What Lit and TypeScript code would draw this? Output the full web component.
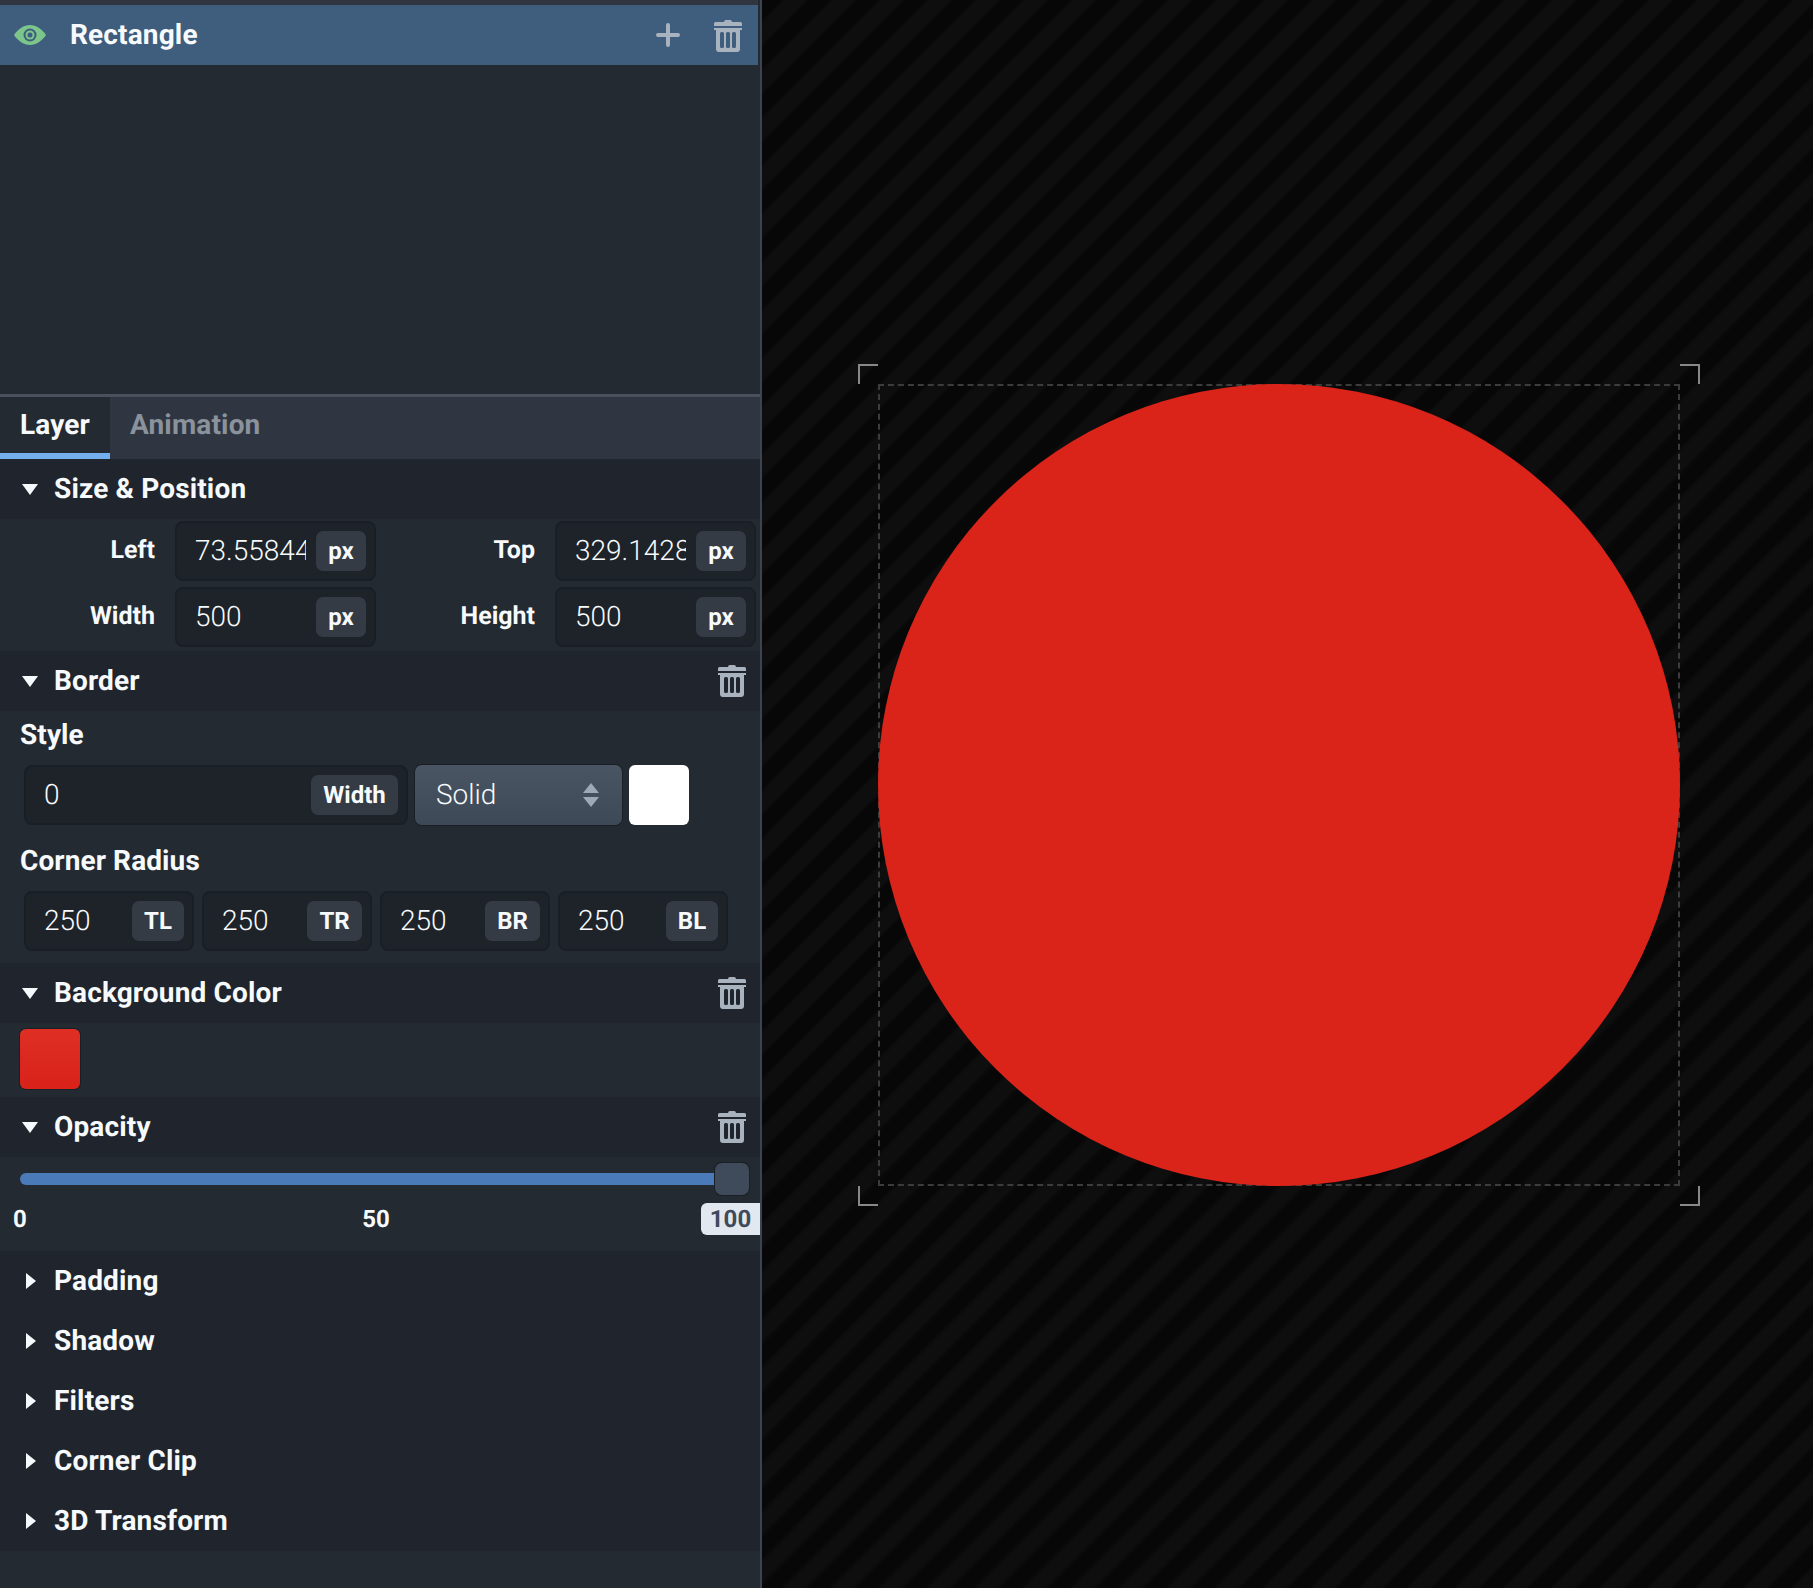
import { LitElement, html, css } from "lit";
import { customElement } from "lit/decorators.js";

const trash = () => html`<svg class="trash" viewBox="0 0 28 32"><path fill-rule="evenodd" d="M12 0h4a2 2 0 0 1 2 2h8.500a1.500 1.500 0 0 1 1.500 1.500V6H0V3.500A1.500 1.500 0 0 1 1.500 2H10a2 2 0 0 1 2-2zM0 8h28v2h-2v19a3 3 0 0 1-3 3H5a3 3 0 0 1-3-3V10H0zM7.500 12A1.500 1.500 0 0 0 6 13.500v13A1.500 1.500 0 0 0 7.500 28h1a1.500 1.500 0 0 0 1.500-1.500v-13A1.500 1.500 0 0 0 8.500 12zM13.500 12a1.500 1.500 0 0 0-1.500 1.500v13a1.500 1.500 0 0 0 1.500 1.500h1a1.500 1.500 0 0 0 1.500-1.500v-13a1.500 1.500 0 0 0-1.500-1.500zM19.500 12a1.500 1.500 0 0 0-1.500 1.500v13a1.500 1.500 0 0 0 1.500 1.500h1a1.500 1.500 0 0 0 1.500-1.500v-13a1.500 1.500 0 0 0-1.500-1.500z"/></svg>`;

@customElement("app-root")
export class AppRoot extends LitElement {
  static styles = css`
    :host { display: flex; width: 1813px; height: 1588px; overflow: hidden; font-family: Roboto, "Liberation Sans", sans-serif; color: #f7fafc; text-rendering: geometricPrecision; }
    .panel { width: 760px; flex: none; background: #232a32; display: flex; flex-direction: column; border-right: 2px solid #3c444f; }
    .strip { height: 5px; background: #2f3640; width: 758px; }
    .layer { width: 758px; height: 60px; background: #3f5d7d; display: flex; align-items: center; font-size: 28px; font-weight: 700; letter-spacing: 0.15px; }
    .layer span { padding-bottom: 2px; }
    .eye { width: 32px; height: 20px; margin-left: 14px; margin-right: 24px; flex: none; }
    .grow { flex: 1; }
    .plus { width: 24px; height: 24px; flex: none; margin-right: 34px; }
    .layer .trash { margin-right: 16px; margin-top: 2px; }
    .trash { width: 28px; height: 32px; fill: #a9b3bf; flex: none; }
    .layers { height: 329px; }
    .divider { height: 3px; background: #49515c; }
    .tabs { height: 62px; background: #2f3642; display: flex; font-size: 28px; font-weight: 700; letter-spacing: 0.15px; }
    .tab { padding: 0 20px 8px; display: flex; align-items: center; color: #8a929c; }
    .tab.on { background: #232a32; color: #f7fafc; border-bottom: 6px solid #74aeed; padding-bottom: 2px; width: 110px; box-sizing: border-box; }
    .head { height: 60px; background: #20252d; display: flex; align-items: center; font-size: 28px; font-weight: 700; padding-right: 14px; letter-spacing: 0.15px; }
    .head span { padding-bottom: 2px; }
    .tri { width: 32px; margin-left: 20px; margin-right: 2px; flex: none; display: flex; }
    .down { margin-left: 2px; width: 0; height: 0; border-left: 8px solid transparent; border-right: 8px solid transparent; border-top: 11px solid #f7fafc; margin-top: 1px; }
    .right { margin-left: 6px; width: 0; height: 0; border-top: 8px solid transparent; border-bottom: 8px solid transparent; border-left: 10px solid #f7fafc; }
    .size { display: grid; grid-template-columns: 155px 201px 139px 201px; column-gap: 20px; row-gap: 6px; height: 132px; padding-top: 2px; box-sizing: border-box; align-items: center; grid-auto-rows: 60px; }
    .lab { text-align: right; font-size: 25px; font-weight: 700; padding-bottom: 2px; }
    .box { height: 60px; box-sizing: border-box; background: #1d2329; border: 2px solid #1a1f26; border-radius: 8px; display: flex; align-items: center; padding-left: 18px; padding-right: 8px; font-size: 28px; font-weight: 300; color: #f7fafc; }
    .val { flex: 1; overflow: hidden; white-space: nowrap; min-width: 0; margin-right: 10px; padding-bottom: 1px; }
    .tag { height: 40px; flex: none; background: #343b45; border-radius: 7px; display: flex; align-items: center; justify-content: center; font-size: 24px; font-weight: 700; }
    .border { height: 252px; padding-left: 20px; box-sizing: border-box; }
    .sub { font-size: 28px; font-weight: 700; height: 30px; line-height: 30px; letter-spacing: 0.1px; }
    .style-row { display: flex; margin: 15px 0 0 4px; gap: 7px; }
    .select { width: 207px; height: 60px; box-sizing: border-box; border-radius: 7px; background: linear-gradient(#4a5564, #3e4957); box-shadow: 0 0 0 1px #1a1f26; display: flex; align-items: center; padding-left: 21px; font-size: 28px; font-weight: 300; position: relative; }
    .arrows { position: absolute; left: 168px; top: 18px; width: 16px; height: 24px; fill: #9fa9b5; }
    .swatch { width: 60px; height: 60px; border-radius: 6px; background: #fff; }
    .radii { display: flex; gap: 8px; margin: 15px 0 0 4px; }
    .bg-body { height: 74px; padding: 6px 0 0 20px; box-sizing: border-box; }
    .red { width: 60px; height: 60px; border-radius: 6px; background: linear-gradient(#df2f24, #d8221a); box-shadow: 0 0 0 1px #1a1f26; }
    .op { height: 94px; position: relative; }
    .track { position: absolute; left: 20px; top: 16px; width: 700px; height: 12px; border-radius: 6px; background: #4a7ab8; }
    .thumb { position: absolute; left: 715px; top: 6px; width: 34px; height: 32px; border-radius: 7px; background: #3f4b5a; box-shadow: 0 0 0 1px #1a1f26; }
    .tick { position: absolute; top: 46px; height: 32px; line-height: 32px; font-size: 24px; font-weight: 700; transform: translateX(-50%); }
    .bubble { position: absolute; left: 701px; top: 46px; width: 59px; height: 32px; line-height: 32px; border-radius: 6px 0 0 6px; background: #e2e8f0; color: #3f4a5a; text-align: center; font-size: 24px; font-weight: 700; }
    .rest { flex: 1; }
    .canvas { flex: 1; position: relative; background: repeating-linear-gradient(135deg, #070707 0 13px, #0e0e0e 17px 30px, #070707 34px); }
    .sel { position: absolute; left: 116px; top: 384px; width: 802px; height: 802px; box-sizing: border-box; border: 2px dashed #3c3c3c; }
    .circle { position: absolute; left: -2px; top: -2px; width: 802px; height: 802px; border-radius: 50%; background: #da2319; }
    .c { position: absolute; width: 20px; height: 20px; border: 0 solid #888; box-sizing: border-box; }
    .tl { left: -22px; top: -22px; border-width: 2px 0 0 2px; }
    .tr { right: -22px; top: -22px; border-width: 2px 2px 0 0; }
    .bl { left: -22px; bottom: -22px; border-width: 0 0 2px 2px; }
    .br { right: -22px; bottom: -22px; border-width: 0 2px 2px 0; }
  `;

  head(t: string, open: boolean, del: boolean) {
    return html`<div class="head"><div class="tri"><div class=${open ? "down" : "right"}></div></div><span>${t}</span><div class="grow"></div>${del ? trash() : ""}</div>`;
  }
  field(v: string, t: string, w: number, bw?: number) {
    return html`<div class="box" style=${bw ? `width:${bw}px` : ""}><div class="val">${v}</div><div class="tag" style="width:${w}px">${t}</div></div>`;
  }
  render() {
    return html`
      <div class="panel">
        <div class="strip"></div>
        <div class="layer">
          <svg class="eye" viewBox="0 0 32 20"><path fill="#7cc68c" d="M0 10C4 4 10 0 16 0s12 4 16 10c-4 6-10 10-16 10S4 16 0 10z"/><circle cx="16" cy="10" r="6.500" fill="#3f5d7d"/><circle cx="16" cy="10" r="4.500" fill="#7cc68c"/><circle cx="16" cy="10" r="2.500" fill="#3f5d7d"/></svg>
          <span>Rectangle</span><div class="grow"></div>
          <svg class="plus" viewBox="0 0 24 24"><path d="M12 2v20M2 12h20" stroke="#a9b3bf" stroke-width="4" stroke-linecap="round"/></svg>
          ${trash()}
        </div>
        <div class="layers"></div>
        <div class="divider"></div>
        <div class="tabs"><div class="tab on">Layer</div><div class="tab">Animation</div></div>
        ${this.head("Size & Position", true, false)}
        <div class="size">
          <div class="lab">Left</div>${this.field("73.55844", "px", 50)}
          <div class="lab">Top</div>${this.field("329.14285", "px", 50)}
          <div class="lab">Width</div>${this.field("500", "px", 50)}
          <div class="lab">Height</div>${this.field("500", "px", 50)}
        </div>
        ${this.head("Border", true, true)}
        <div class="border">
          <div class="sub" style="padding-top:9px">Style</div>
          <div class="style-row">
            ${this.field("0", "Width", 87, 384)}
            <div class="select"><span style="padding-bottom:1px">Solid</span><svg class="arrows" viewBox="0 0 16 24"><path d="M8 0l8 10H0zM8 24L0 14h16z"/></svg></div>
            <div class="swatch"></div>
          </div>
          <div class="sub" style="margin-top:21px">Corner Radius</div>
          <div class="radii">
            ${this.field("250", "TL", 52, 170)}
            ${this.field("250", "TR", 55, 170)}
            ${this.field("250", "BR", 55, 170)}
            ${this.field("250", "BL", 52, 170)}
          </div>
        </div>
        ${this.head("Background Color", true, true)}
        <div class="bg-body"><div class="red"></div></div>
        ${this.head("Opacity", true, true)}
        <div class="op">
          <div class="track"></div><div class="thumb"></div>
          <div class="tick" style="left:20px">0</div>
          <div class="tick" style="left:376px">50</div>
          <div class="bubble">100</div>
        </div>
        ${["Padding", "Shadow", "Filters", "Corner Clip", "3D Transform"].map((t) => this.head(t, false, false))}
        <div class="rest"></div>
      </div>
      <div class="canvas">
        <div class="sel">
          <div class="circle"></div>
          <div class="c tl"></div><div class="c tr"></div><div class="c bl"></div><div class="c br"></div>
        </div>
      </div>
    `;
  }
}
